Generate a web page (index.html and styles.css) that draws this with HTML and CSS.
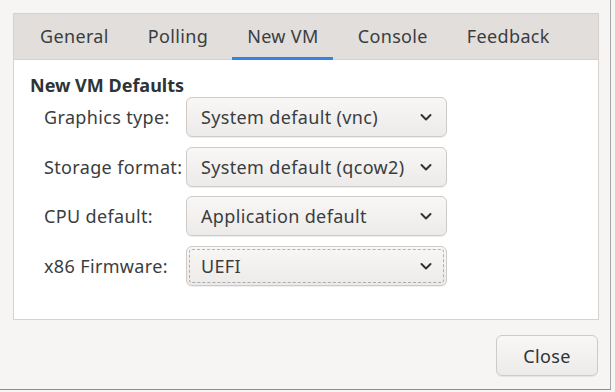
FILE: index.html
```html
<!DOCTYPE html>
<html>
<head>
<meta charset="utf-8">
<link rel="stylesheet" href="styles.css">
</head>
<body>
<div class="window">
  <div class="notebook">
    <div class="tabs">
      <div class="tab">General</div>
      <div class="tab">Polling</div>
      <div class="tab active">New VM</div>
      <div class="tab">Console</div>
      <div class="tab">Feedback</div>
    </div>
    <div class="page">
      <div class="heading">New VM Defaults</div>
      <div class="form">
        <div class="label">Graphics type:</div>
        <div class="combo"><span>System default (vnc)</span><svg class="chev" viewBox="0 0 16 16"><path d="M3.5 6 L8 10.5 L12.5 6"/></svg></div>
        <div class="label">Storage format:</div>
        <div class="combo"><span>System default (qcow2)</span><svg class="chev" viewBox="0 0 16 16"><path d="M3.5 6 L8 10.5 L12.5 6"/></svg></div>
        <div class="label">CPU default:</div>
        <div class="combo"><span>Application default</span><svg class="chev" viewBox="0 0 16 16"><path d="M3.5 6 L8 10.5 L12.5 6"/></svg></div>
        <div class="label">x86 Firmware:</div>
        <div class="combo focus"><span>UEFI</span><svg class="chev" viewBox="0 0 16 16"><path d="M3.5 6 L8 10.5 L12.5 6"/></svg></div>
      </div>
    </div>
  </div>
  <div class="footer">
    <button class="btn">Close</button>
  </div>
</div>
</body>
</html>
```

FILE: styles.css
```css
html, body {
  margin: 0;
  padding: 0;
  background: #f6f5f4;
}
body {
  width: 615px;
  height: 392px;
  overflow: hidden;
  font-family: "Noto Sans", "DejaVu Sans", sans-serif;
  font-size: 18px;
  letter-spacing: 0.35px;
  color: #2e3436;
}
.window {
  width: 611px;
  height: 390px;
  box-sizing: border-box;
  border-right: 1px solid #a5a5a5;
  border-bottom: 1px solid #8e8e8e;
  padding: 13px 11px 0 13px;
  display: flex;
  flex-direction: column;
}
.notebook {
  height: 307px;
  box-sizing: border-box;
  border: 1px solid #d6d1cd;
  display: flex;
  flex-direction: column;
}
.tabs {
  height: 45px;
  background: #e1dedb;
  border-bottom: 1px solid #d6d1cd;
  display: flex;
  padding-left: 6.5px;
}
.tab {
  padding: 0 19.5px 2px;
  display: flex;
  align-items: center;
  position: relative;
  color: #3a3d3e;
}
.tab.active::after {
  content: "";
  position: absolute;
  left: 4px;
  right: 5px;
  bottom: -1px;
  height: 3px;
  background: #3584e4;
}
.page {
  flex: 1;
  background: #ffffff;
  padding: 14px 0 0 16px;
}
.heading {
  font-weight: bold;
  letter-spacing: 0;
  line-height: 22px;
  color: #2e3436;
}
.form {
  margin-top: 1px;
  margin-left: 14px;
  display: grid;
  grid-template-columns: 134px 261px;
  column-gap: 8px;
  row-gap: 9.5px;
}
.label {
  display: flex;
  align-items: center;
  height: 40px;
  color: #3a3d3e;
  white-space: nowrap;
}
.combo {
  height: 40px;
  box-sizing: border-box;
  border: 1px solid #cfcac5;
  border-radius: 6px;
  background: linear-gradient(#f8f7f6, #edebe9);
  box-shadow: 0 1px 1px rgba(0,0,0,0.07);
  display: flex;
  align-items: center;
  justify-content: space-between;
  padding: 0 12px 0 14px;
  color: #3a3d3e;
  white-space: nowrap;
}
.combo.focus {
  outline: 1px dashed rgba(46,52,54,0.35);
  outline-offset: -4px;
}
.chev {
  width: 16px;
  height: 16px;
  fill: none;
  stroke: #2e3436;
  stroke-width: 2;
  stroke-linecap: round;
  stroke-linejoin: round;
}
.footer {
  display: flex;
  justify-content: flex-end;
  padding-top: 15px;
}
.btn {
  width: 102px;
  height: 41px;
  font: inherit;
  letter-spacing: inherit;
  color: #2e3436;
  border: 1px solid #cfcac5;
  border-radius: 6px;
  background: linear-gradient(#f8f7f6, #edebe9);
  box-shadow: 0 1px 1px rgba(0,0,0,0.07);
  margin-right: 1px;
}
```
